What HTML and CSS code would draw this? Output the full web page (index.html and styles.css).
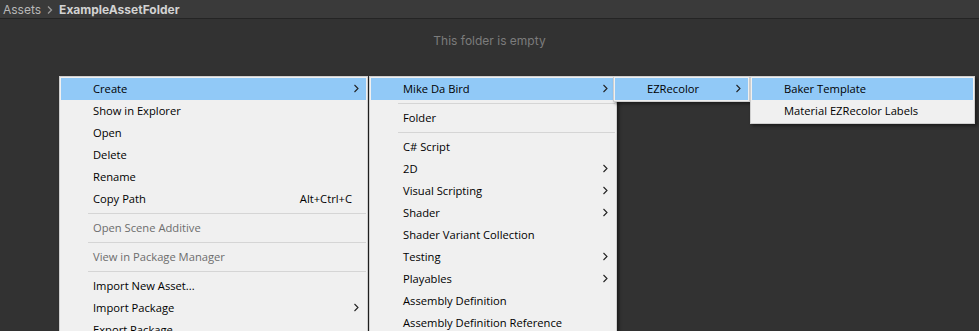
FILE: index.html
```html
<!doctype html>
<html lang="en">
  <head>
    <meta charset="UTF-8" />
    <meta name="viewport" content="width=device-width, initial-scale=1.0" />
    <title>Project</title>
    <link rel="stylesheet" href="styles.css">
  </head>

  <body>
    <div class="breadcrumb">
      <span class="crumb">Assets</span>
      <svg class="crumb-sep" width="8" height="10" viewBox="0 0 8 10"><polyline points="2,1.5 5.5,5 2,8.5" fill="none" stroke="#9a9a9a" stroke-width="1.3" /></svg>
      <span class="crumb current">ExampleAssetFolder</span>
    </div>
    <div class="folder">
      <p class="empty">This folder is empty</p>
    </div>

    <!-- main context menu -->
    <div class="menu menu-main">
      <div class="item active"><span class="label">Create</span><span class="arrow"><svg width="6" height="9" viewBox="0 0 6 9"><polyline points="1.5,1 5,4.5 1.5,8" fill="none" stroke="#222" stroke-width="1.1" /></svg></span></div>
      <div class="item"><span class="label">Show in Explorer</span><span class="arrow"></span></div>
      <div class="item"><span class="label">Open</span><span class="arrow"></span></div>
      <div class="item"><span class="label">Delete</span><span class="arrow"></span></div>
      <div class="item"><span class="label">Rename</span><span class="arrow"></span></div>
      <div class="item"><span class="label">Copy Path</span><span class="shortcut">Alt+Ctrl+C</span><span class="arrow"></span></div>
      <div class="sep"></div>
      <div class="item disabled"><span class="label">Open Scene Additive</span><span class="arrow"></span></div>
      <div class="sep"></div>
      <div class="item disabled"><span class="label">View in Package Manager</span><span class="arrow"></span></div>
      <div class="sep"></div>
      <div class="item"><span class="label">Import New Asset...</span><span class="arrow"></span></div>
      <div class="item"><span class="label">Import Package</span><span class="arrow"><svg width="6" height="9" viewBox="0 0 6 9"><polyline points="1.5,1 5,4.5 1.5,8" fill="none" stroke="#222" stroke-width="1.1" /></svg></span></div>
      <div class="item"><span class="label">Export Package...</span><span class="arrow"></span></div>
    </div>

    <!-- create submenu -->
    <div class="menu menu-create">
      <div class="item active"><span class="label">Mike Da Bird</span><span class="arrow"><svg width="6" height="9" viewBox="0 0 6 9"><polyline points="1.5,1 5,4.5 1.5,8" fill="none" stroke="#222" stroke-width="1.1" /></svg></span></div>
      <div class="sep"></div>
      <div class="item"><span class="label">Folder</span><span class="arrow"></span></div>
      <div class="sep"></div>
      <div class="item"><span class="label">C# Script</span><span class="arrow"></span></div>
      <div class="item"><span class="label">2D</span><span class="arrow"><svg width="6" height="9" viewBox="0 0 6 9"><polyline points="1.5,1 5,4.5 1.5,8" fill="none" stroke="#222" stroke-width="1.1" /></svg></span></div>
      <div class="item"><span class="label">Visual Scripting</span><span class="arrow"><svg width="6" height="9" viewBox="0 0 6 9"><polyline points="1.5,1 5,4.5 1.5,8" fill="none" stroke="#222" stroke-width="1.1" /></svg></span></div>
      <div class="item"><span class="label">Shader</span><span class="arrow"><svg width="6" height="9" viewBox="0 0 6 9"><polyline points="1.5,1 5,4.5 1.5,8" fill="none" stroke="#222" stroke-width="1.1" /></svg></span></div>
      <div class="item"><span class="label">Shader Variant Collection</span><span class="arrow"></span></div>
      <div class="item"><span class="label">Testing</span><span class="arrow"><svg width="6" height="9" viewBox="0 0 6 9"><polyline points="1.5,1 5,4.5 1.5,8" fill="none" stroke="#222" stroke-width="1.1" /></svg></span></div>
      <div class="item"><span class="label">Playables</span><span class="arrow"><svg width="6" height="9" viewBox="0 0 6 9"><polyline points="1.5,1 5,4.5 1.5,8" fill="none" stroke="#222" stroke-width="1.1" /></svg></span></div>
      <div class="item"><span class="label">Assembly Definition</span><span class="arrow"></span></div>
      <div class="item"><span class="label">Assembly Definition Reference</span><span class="arrow"></span></div>
    </div>

    <!-- mike da bird submenu -->
    <div class="menu menu-author">
      <div class="item active"><span class="label">EZRecolor</span><span class="arrow"><svg width="6" height="9" viewBox="0 0 6 9"><polyline points="1.5,1 5,4.5 1.5,8" fill="none" stroke="#222" stroke-width="1.1" /></svg></span></div>
    </div>

    <!-- ezrecolor submenu -->
    <div class="menu menu-ez">
      <div class="item active"><span class="label">Baker Template</span></div>
      <div class="item"><span class="label">Material EZRecolor Labels</span></div>
    </div>
  </body>
</html>
```

FILE: styles.css
```css
html,
body {
  height: 100%;
  overflow: hidden;
}

body {
  margin: 0;
  background-color: #323232;
  font-family: Inter, "Noto Sans", sans-serif;
  font-size: 12px;
}

.breadcrumb {
  display: flex;
  align-items: center;
  height: 18px;
  padding-left: 3px;
  background-color: #3a3a3a;
  border-bottom: 1px solid #242424;
}

.crumb {
  color: #b8b8b8;
}

.crumb-sep {
  margin: 1px 5px 0 5px;
}

.crumb.current {
  color: #d2d2d2;
  font-weight: bold;
}

.folder {
  padding-top: 15px;
}

.empty {
  margin: 0;
  text-align: center;
  line-height: 14px;
  color: #7c7c7c;
}

/* popup menus */
.menu {
  position: absolute;
  top: 76px;
  padding: 1px;
  background-color: #f0f0f0;
  border: 1px solid #cfcfcf;
  box-shadow: 2px 2px 3px rgba(0, 0, 0, 0.45);
  font-family: "Open Sans", "Noto Sans", sans-serif;
  font-size: 11.2px;
  color: #000;
}

.menu-main {
  left: 59px;
  width: 305px;
}

.menu-create {
  left: 369px;
  width: 244px;
}

.menu-author {
  left: 613px;
  width: 133px;
}

.menu-ez {
  left: 750px;
  width: 221px;
}

.item {
  display: flex;
  align-items: center;
  height: 22px;
  padding-left: 32px;
  padding-right: 7px;
  padding-bottom: 1px;
  box-sizing: border-box;
  white-space: nowrap;
}

.item.active {
  background-color: #91c9f7;
}

.item.disabled {
  color: #6d6d6d;
}

.label {
  flex: 1;
}

.shortcut {
  margin-left: 10px;
}

.arrow {
  display: flex;
  justify-content: flex-end;
  width: 6px;
  margin-left: 1px;
}

.sep {
  height: 1px;
  margin: 3px 0 3px 27px;
  background-color: #d5d5d5;
}
```
